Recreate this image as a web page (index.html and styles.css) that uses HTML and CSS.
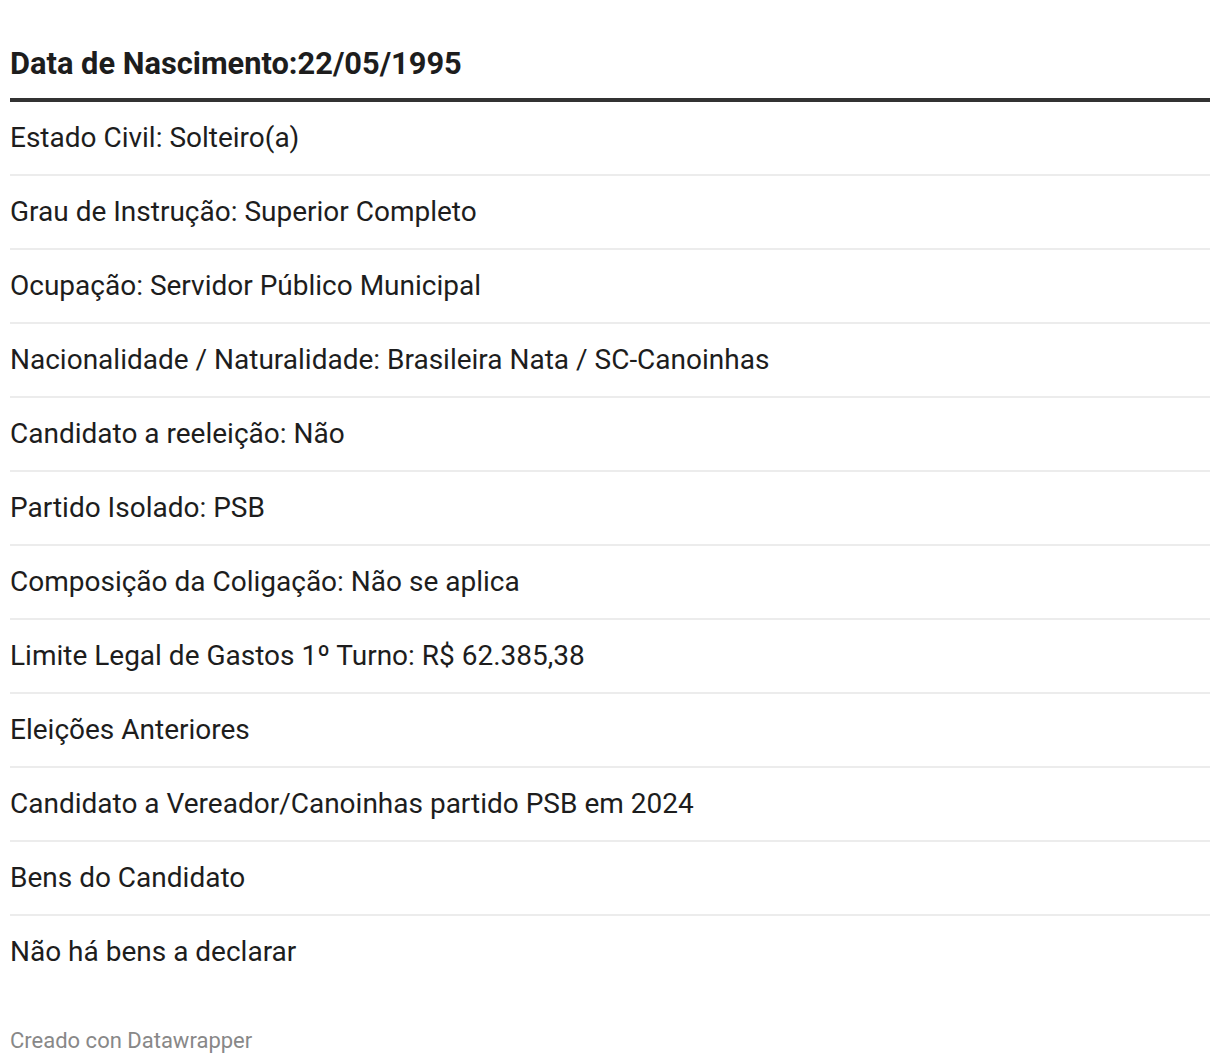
FILE: index.html
```html
<!DOCTYPE html>
<html lang="pt">
<head>
<meta charset="utf-8">
<link rel="stylesheet" href="styles.css">
</head>
<body>
<div class="chart">
  <table class="dw-table">
    <thead>
      <tr><th>Data de Nascimento:22/05/1995</th></tr>
    </thead>
    <tbody>
      <tr><td>Estado Civil: Solteiro(a)</td></tr>
      <tr><td>Grau de Instrução: Superior Completo</td></tr>
      <tr><td>Ocupação: Servidor Público Municipal</td></tr>
      <tr><td>Nacionalidade / Naturalidade: Brasileira Nata / SC-Canoinhas</td></tr>
      <tr><td>Candidato a reeleição: Não</td></tr>
      <tr><td>Partido Isolado: PSB</td></tr>
      <tr><td>Composição da Coligação: Não se aplica</td></tr>
      <tr><td>Limite Legal de Gastos 1º Turno: R$ 62.385,38</td></tr>
      <tr><td>Eleições Anteriores</td></tr>
      <tr><td>Candidato a Vereador/Canoinhas partido PSB em 2024</td></tr>
      <tr><td>Bens do Candidato</td></tr>
      <tr><td>Não há bens a declarar</td></tr>
    </tbody>
  </table>
  <div class="footer">Creado con Datawrapper</div>
</div>
</body>
</html>
```

FILE: styles.css
```css
html, body {
  margin: 0;
  padding: 0;
  background: #fff;
}
body {
  font-family: Roboto, "Liberation Sans", Arial, sans-serif;
  color: #1d1d1d;
}
.chart {
  padding: 0 10px;
}
.dw-table {
  width: 100%;
  border-collapse: collapse;
  margin-top: 30px;
}
.dw-table th {
  text-align: left;
  font-weight: 700;
  font-size: 30.8px;
  line-height: 36px;
  padding: 16px 0 16px;
  border-bottom: 4px solid #333;
}
.dw-table td {
  font-size: 28px;
  line-height: 32px;
  padding: 20px 0 20px;
  border-bottom: 2px solid #ececec;
}
.dw-table tbody tr:last-child td {
  border-bottom: none;
}
.footer {
  margin-top: 40px;
  font-size: 22px;
  line-height: 26px;
  color: #888;
}
```
